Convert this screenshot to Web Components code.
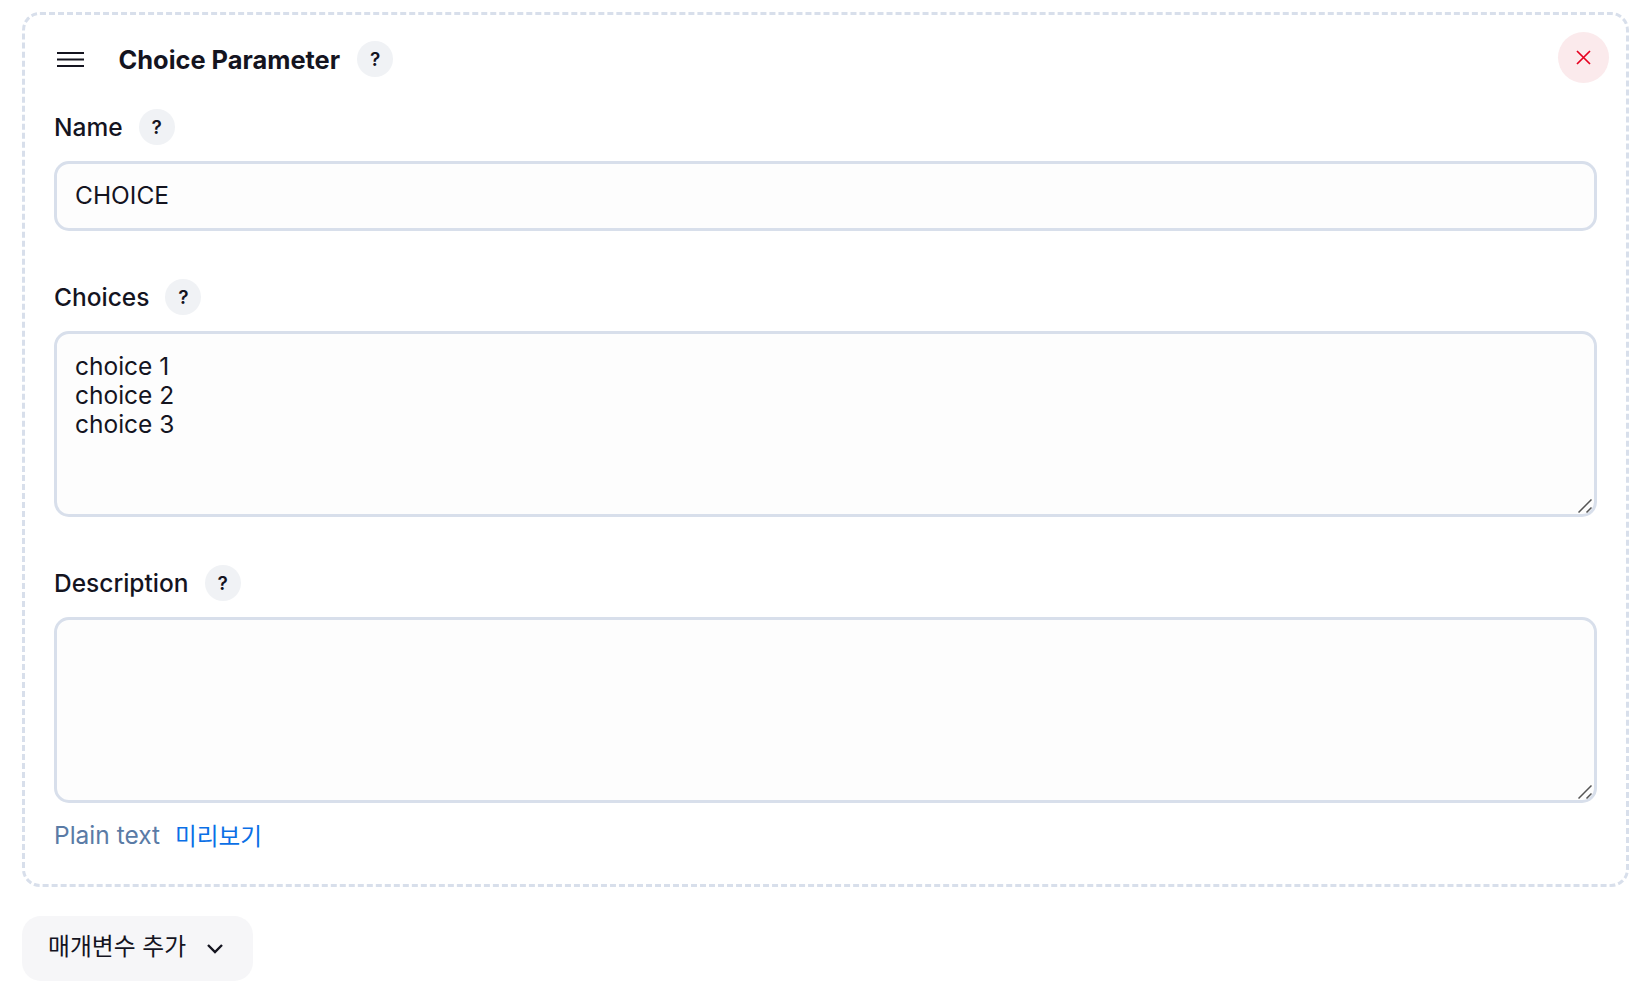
<!DOCTYPE html>
<html lang="ko">
<head>
<meta charset="utf-8">
<title>Choice Parameter</title>
<style>
  html, body { margin: 0; background: #fff; }
  body {
    padding: 12px 22px 24px 22px;
    font-family: Inter, "Noto Sans CJK KR", sans-serif;
    font-size: 24.5px;
    color: #14141f;
  }
</style>
</head>
<body>
<param-card heading="Choice Parameter">
  <param-field label="Name"><text-box>CHOICE</text-box></param-field>
  <param-field label="Choices"><text-box multiline>choice 1
choice 2
choice 3</text-box></param-field>
  <param-field label="Description" last><text-box multiline></text-box></param-field>
  <preview-links></preview-links>
</param-card>
<add-button>매개변수 추가</add-button>

<script>
class HelpBadge extends HTMLElement {
  constructor() {
    super();
    this.attachShadow({ mode: 'open' });
    this.shadowRoot.innerHTML = `
      <style>
        :host {
          display: inline-flex;
          width: 36px;
          height: 36px;
          border-radius: 50%;
          background: #f0f2f5;
          align-items: center;
          justify-content: center;
          font-size: 19px;
          font-weight: 600;
          color: #14141f;
        }
      </style>
      ?`;
  }
}

class ParamCard extends HTMLElement {
  constructor() {
    super();
    this.attachShadow({ mode: 'open' });
  }
  connectedCallback() {
    const heading = this.getAttribute('heading') || '';
    this.shadowRoot.innerHTML = `
      <style>
        :host {
          display: block;
          box-sizing: border-box;
          width: 1607px;
          height: 875px;
          border: 3px dashed #d8dfeb;
          border-radius: 18px;
          padding: 18px 29px 0 29px;
          margin-bottom: 29px;
        }
        .head {
          display: flex;
          align-items: center;
          height: 52px;
          margin-bottom: 24px;
        }
        .grip {
          width: 27px;
          height: 17px;
          margin-left: 3px;
          margin-right: 34.5px;
          flex: none;
        }
        h2 {
          margin: 0 17px 0 0;
          font-size: 25.4px;
          font-weight: 700;
          color: #14141f;
        }
        .close {
          margin-left: auto;
          margin-right: -12px;
          margin-top: -4px;
          width: 51px;
          height: 51px;
          border-radius: 50%;
          background: #fbeaec;
          display: flex;
          align-items: center;
          justify-content: center;
        }
        .close svg { width: 15px; height: 15px; }
      </style>
      <div class="head">
        <svg class="grip" viewBox="0 0 27 17">
          <path d="M0 2h27M0 8.5h27M0 15h27" stroke="#14141f" stroke-width="2.2" fill="none"/>
        </svg>
        <h2>${heading}</h2>
        <help-badge></help-badge>
        <div class="close">
          <svg viewBox="0 0 15 15">
            <path d="M1 1l13 13M14 1L1 14" stroke="#e6001f" stroke-width="1.7" fill="none"/>
          </svg>
        </div>
      </div>
      <slot></slot>`;
  }
}

class ParamField extends HTMLElement {
  constructor() {
    super();
    this.attachShadow({ mode: 'open' });
  }
  connectedCallback() {
    const label = this.getAttribute('label') || '';
    this.shadowRoot.innerHTML = `
      <style>
        :host {
          display: block;
          margin-bottom: 48px;
        }
        :host([last]) { margin-bottom: 0; }
        .label {
          display: flex;
          align-items: center;
          gap: 16px;
          height: 36px;
          margin-bottom: 15.5px;
          font-weight: 450;
        }
      </style>
      <div class="label"><span>${label}</span><help-badge></help-badge></div>
      <slot></slot>`;
  }
}

class TextBox extends HTMLElement {
  constructor() {
    super();
    this.attachShadow({ mode: 'open' });
  }
  connectedCallback() {
    const multi = this.hasAttribute('multiline');
    this.shadowRoot.innerHTML = `
      <style>
        :host { display: block; position: relative; }
        .box, textarea {
          display: block;
          box-sizing: border-box;
          width: 100%;
          border: 3px solid #d8dfeb;
          border-radius: 15px;
          background: #fdfdfd;
          color: #14141f;
          font: 400 24.5px/29px Inter, sans-serif;
          padding: 0 18px;
          margin: 0;
          outline: none;
        }
        .box {
          height: 70.5px;
          display: flex;
          align-items: center;
        }
        textarea {
          height: 186.5px;
          padding: 18px 18px;
          resize: none;
        }
        .grip {
          position: absolute;
          right: 5px;
          bottom: 4px;
          width: 14px;
          height: 14px;
        }
      </style>
      ${multi
        ? `<textarea spellcheck="false"></textarea>
           <svg class="grip" viewBox="0 0 14 14"><path d="M0.5 13.5L13.5 0.5M8.5 13.5L13.5 8.5" stroke="#555" stroke-width="1.5" fill="none"/></svg>`
        : '<div class="box"><slot></slot></div>'}`;
    if (multi) this.shadowRoot.querySelector('textarea').textContent = this.textContent;
  }
}

class PreviewLinks extends HTMLElement {
  constructor() {
    super();
    this.attachShadow({ mode: 'open' });
    this.shadowRoot.innerHTML = `
      <style>
        :host {
          display: flex;
          gap: 15px;
          align-items: center;
          margin-top: 15px;
        }
        .plain { color: #5a7ba6; }
        a { color: #0a6fe6; text-decoration: none; font-size: 23.6px; }
      </style>
      <span class="plain">Plain text</span><a href="#">미리보기</a>`;
  }
}

class AddButton extends HTMLElement {
  constructor() {
    super();
    this.attachShadow({ mode: 'open' });
    this.shadowRoot.innerHTML = `
      <style>
        :host {
          display: inline-flex;
          align-items: center;
          gap: 20px;
          box-sizing: border-box;
          height: 65px;
          padding: 0 29px 0 26px;
          border-radius: 19px;
          background: #f6f6f8;
          color: #14141f;
          font-size: 23.8px;
          font-weight: 400;
        }
        .text { margin-bottom: 9px; }
        svg { width: 18px; height: 11px; }
      </style>
      <span class="text"><slot></slot></span>
      <svg viewBox="0 0 18 11"><path d="M2 2l7 7 7-7" stroke="#14141f" stroke-width="2.4" fill="none"/></svg>`;
  }
}

customElements.define('help-badge', HelpBadge);
customElements.define('param-card', ParamCard);
customElements.define('param-field', ParamField);
customElements.define('text-box', TextBox);
customElements.define('preview-links', PreviewLinks);
customElements.define('add-button', AddButton);
</script>
</body>
</html>
